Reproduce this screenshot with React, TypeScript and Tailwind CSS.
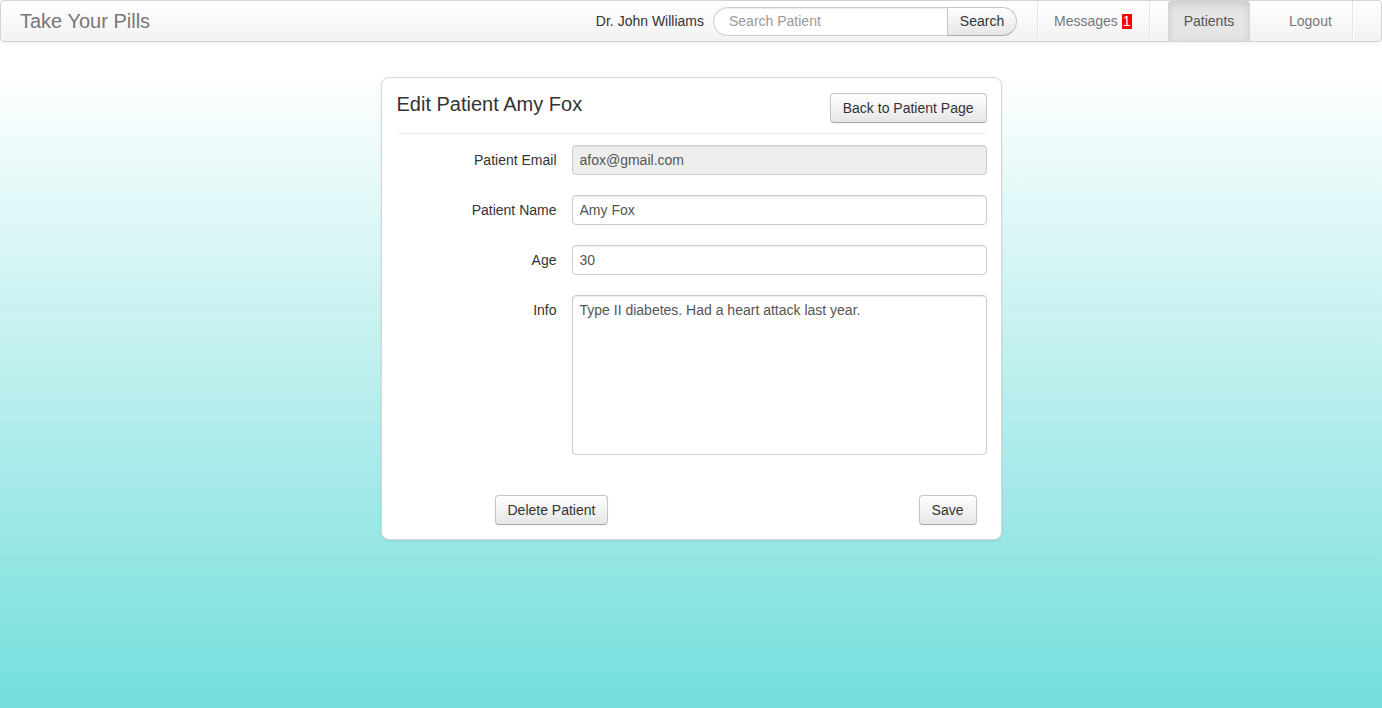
import React from "react";

const Divider = () => (
  <div className="self-stretch w-[2px] border-l border-l-[#e5e5e5] border-r border-r-white" />
);

const btn =
  "h-[30px] px-[12px] text-[14px] text-[#333] bg-gradient-to-b from-white to-[#e6e6e6] border border-[#c5c5c5] border-b-[#a8a8a8] rounded-[4px] shadow-[inset_0_1px_0_rgba(255,255,255,0.2),0_1px_2px_rgba(0,0,0,0.05)]";

const input =
  "h-[30px] w-full px-[7px] text-[14px] text-[#555] border border-[#ccc] rounded-[4px] shadow-[inset_0_1px_1px_rgba(0,0,0,0.075)] outline-none";

const App = () => {
  return (
    <div className="min-h-screen font-['Liberation_Sans',Arial,sans-serif] bg-[linear-gradient(to_bottom,#ffffff_10%,#73dedc_100%)]">
      <nav className="h-[42px] flex items-stretch bg-gradient-to-b from-white to-[#f2f2f2] border border-[#d4d4d4] rounded-[4px] shadow-[0_1px_4px_rgba(0,0,0,0.065)]">
        <a className="self-center pl-[19px] text-[20px] text-[#777]">Take Your Pills</a>

        <div className="ml-auto flex items-center">
          <span className="text-[14px] text-[#333]">Dr. John Williams</span>
          <form className="ml-[9px] flex h-[29px]">
            <input
              className="w-[235px] pl-[15px] text-[14px] text-[#555] placeholder:text-[#999] bg-white border border-[#ccc] rounded-l-[15px] shadow-[inset_0_1px_1px_rgba(0,0,0,0.075)] outline-none"
              placeholder="Search Patient"
            />
            <button
              type="button"
              className="w-[70px] -ml-px text-[14px] text-[#333] bg-gradient-to-b from-white to-[#e6e6e6] border border-[#c5c5c5] border-b-[#a8a8a8] rounded-r-[15px]"
            >
              Search
            </button>
          </form>
        </div>

        <ul className="ml-[20px] flex items-stretch pr-[27px]">
          <Divider />
          <li className="w-[110px] flex items-center pl-[15px] text-[14px] text-[#777]">
            Messages
            <span className="ml-[4px] px-[1px] leading-[15px] bg-[#f00] text-white">1</span>
          </li>
          <Divider />
          <li className="ml-[17px] w-[82px] flex items-center justify-center text-[14px] text-[#555] bg-[#e5e5e5] rounded-t-[4px] shadow-[inset_0_3px_8px_rgba(0,0,0,0.125)]">
            Patients
          </li>
          <div className="ml-[21px]">
            <Divider />
          </div>
          <li className="w-[79px] flex items-center pl-[16px] text-[14px] text-[#777]">
            Logout
          </li>
          <Divider />
        </ul>
      </nav>

      <div className="mt-[35px] mx-auto w-[621px] bg-white border border-[#d6d6d6] rounded-[8px] shadow-[0_1px_3px_rgba(0,0,0,0.08)] pt-[16px] pb-[14px] pl-[15px] pr-[14px]">
        <div className="flex justify-between items-start">
          <h3 className="text-[20px] leading-[20px] text-[#333]">Edit Patient Amy Fox</h3>
          <button type="button" className={"-mt-px " + btn}>
            Back to Patient Page
          </button>
        </div>
        <div className="mt-[10px] border-t border-[#eee]" />

        <div className="mt-[11px] grid grid-cols-[160px_1fr] gap-x-[15px] gap-y-[20px]">
          <label className="self-center text-right text-[14px] text-[#333]">Patient Email</label>
          <input className={input + " bg-[#eee]"} defaultValue="afox@gmail.com" disabled />

          <label className="self-center text-right text-[14px] text-[#333]">Patient Name</label>
          <input className={input + " bg-white"} defaultValue="Amy Fox" />

          <label className="self-center text-right text-[14px] text-[#333]">Age</label>
          <input className={input + " bg-white"} defaultValue="30" />

          <label className="pt-[5px] text-right text-[14px] text-[#333]">Info</label>
          <textarea
            className="h-[160px] w-full px-[7px] py-[4px] text-[14px] leading-[20px] text-[#555] bg-white border border-[#ccc] rounded-[4px] shadow-[inset_0_1px_1px_rgba(0,0,0,0.075)] outline-none resize-none"
            defaultValue="Type II diabetes. Had a heart attack last year."
          />
        </div>

        <div className="mt-[40px] flex justify-between pl-[98px] pr-[10px]">
          <button type="button" className={btn}>
            Delete Patient
          </button>
          <button type="button" className={btn}>
            Save
          </button>
        </div>
      </div>
    </div>
  );
};

export default App;
